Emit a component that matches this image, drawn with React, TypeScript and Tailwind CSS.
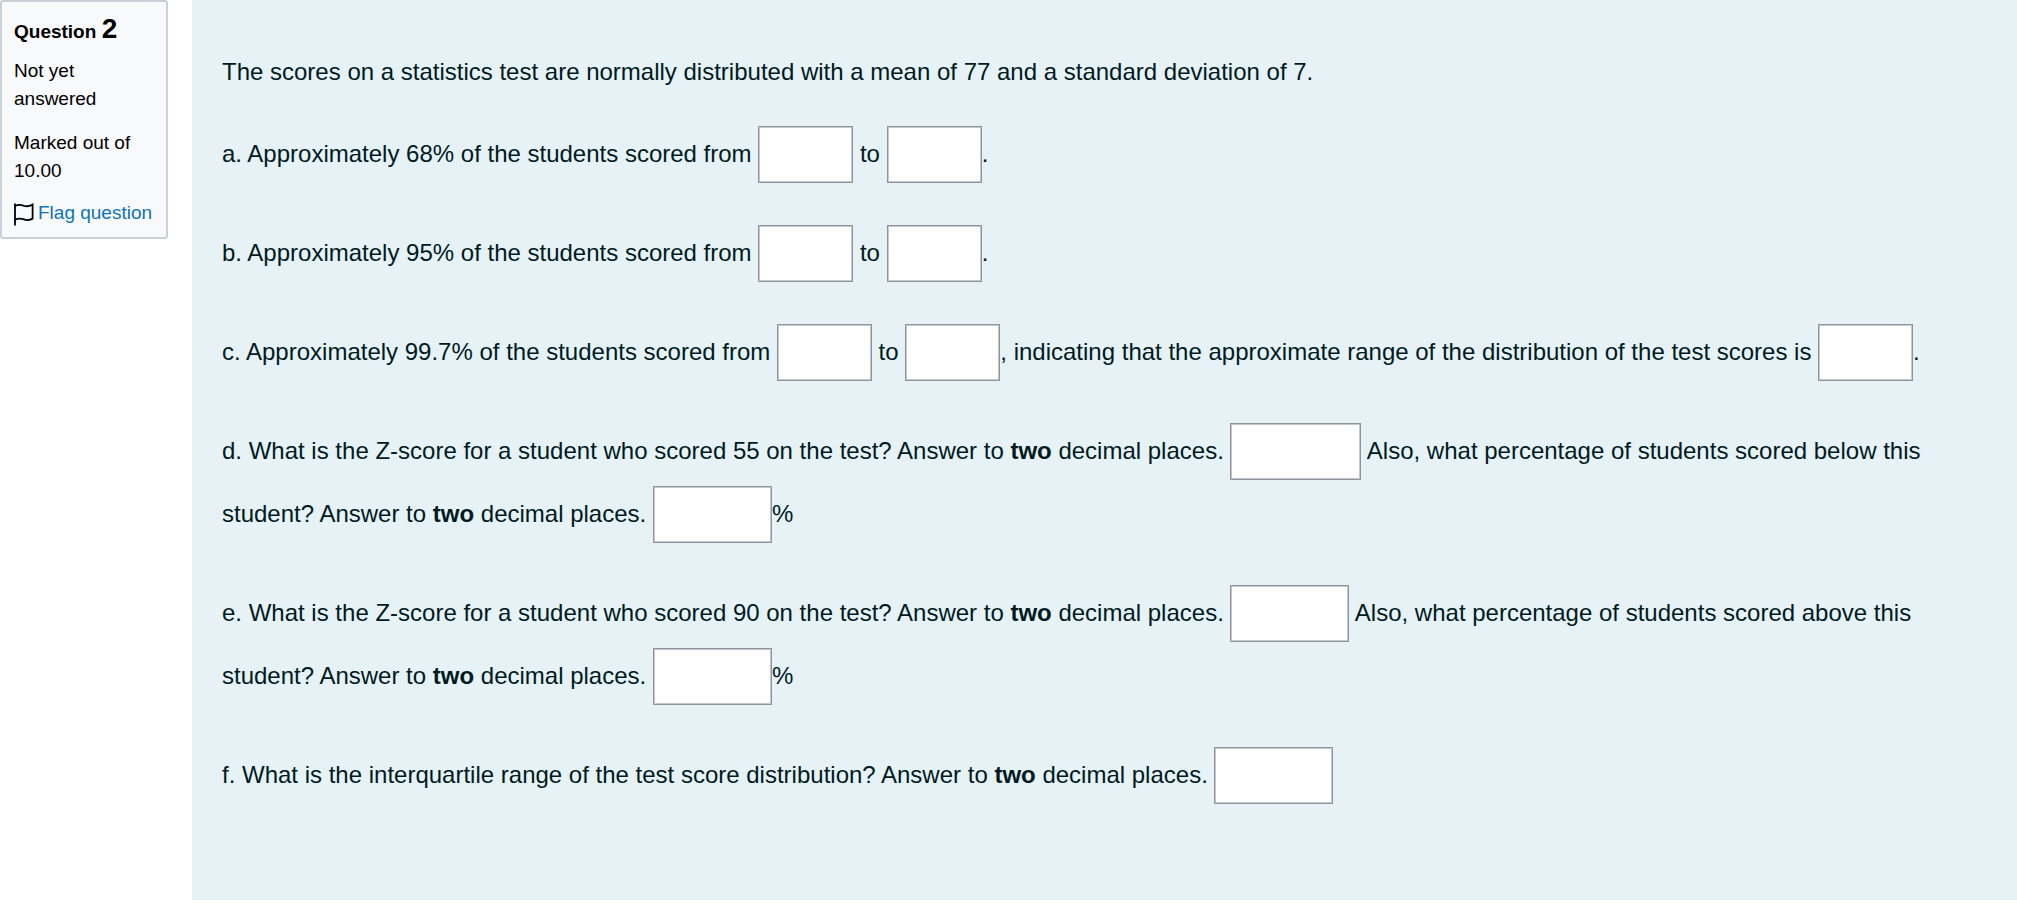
import type { ReactNode } from 'react'

type BlankSize = 'sm' | 'md' | 'lg'

const blankWidths: Record<BlankSize, string> = {
  sm: 'w-[95px]',
  md: 'w-[119px]',
  lg: 'w-[131px]',
}

function Blank({ label, size = 'sm' }: { label: string; size?: BlankSize }) {
  return (
    <input
      type="text"
      aria-label={label}
      className={`${blankWidths[size]} h-[57px] px-3 mt-[2px] mb-[4px] align-middle bg-white border border-[#8f959e] shadow-[inset_0_0_0_1px_#c3c7cd]`}
    />
  )
}

function Part({ children }: { children: ReactNode }) {
  return <p className="mb-9">{children}</p>
}

function FlagIcon() {
  return (
    <svg width="20" height="24" viewBox="0 0 20 24" fill="none" stroke="#000" className="shrink-0" aria-hidden="true">
      <path d="M1 0.5V22.5" strokeWidth="1.8" />
      <path d="M1 3C4 1.4 7 1.6 10 2.8C13 3.8 15.5 3.2 18.6 1.6V15.6C15.5 17.2 13 17.6 10 16.4C7 15.4 4 15.2 1 16.8" strokeWidth="1.8" />
    </svg>
  )
}

export default function App() {
  return (
    <div className="flex items-start gap-6 bg-white font-['Liberation_Sans',Arial,sans-serif] text-2xl leading-9">
      <aside className="w-[168px] shrink-0 rounded-[3px] border-2 border-[#cad0d7] bg-[#f8f9fb] pt-[13px] pr-2 pb-[10px] pl-3 text-[19px] leading-7 text-black">
        <h3 className="font-bold">
          Question <span className="text-[28px]">2</span>
        </h3>
        <div className="mt-[11px]">Not yet answered</div>
        <div className="mt-4">Marked out of 10.00</div>
        <a href="#flag" className="mt-[14px] flex items-end gap-1 whitespace-nowrap text-[#0f74b5]">
          <FlagIcon />
          Flag question
        </a>
      </aside>

      <main className="min-w-0 flex-1 bg-[#e6f2f6] pt-[54px] pr-[60px] pb-14 pl-[30px] text-[#001a1e]">
        <p className="mb-[34px]">
          The scores on a statistics test are normally distributed with a mean of 77 and a standard deviation of 7.
        </p>
        <Part>
          a. Approximately 68% of the students scored from <Blank label="68% lower bound" /> to{' '}
          <Blank label="68% upper bound" />.
        </Part>
        <Part>
          b. Approximately 95% of the students scored from <Blank label="95% lower bound" /> to{' '}
          <Blank label="95% upper bound" />.
        </Part>
        <Part>
          c. Approximately 99.7% of the students scored from <Blank label="99.7% lower bound" /> to{' '}
          <Blank label="99.7% upper bound" />, indicating that the approximate range of the distribution of the test
          scores is <Blank label="Approximate range" />.
        </Part>
        <Part>
          d. What is the Z-score for a student who scored 55 on the test? Answer to <strong>two</strong> decimal
          places. <Blank label="Z-score for 55" size="lg" /> Also, what percentage of students scored below this
          student? Answer to <strong>two</strong> decimal places. <Blank label="Percentage below 55" size="md" />%
        </Part>
        <Part>
          e. What is the Z-score for a student who scored 90 on the test? Answer to <strong>two</strong> decimal
          places. <Blank label="Z-score for 90" size="md" /> Also, what percentage of students scored above this
          student? Answer to <strong>two</strong> decimal places. <Blank label="Percentage above 90" size="md" />%
        </Part>
        <Part>
          f. What is the interquartile range of the test score distribution? Answer to <strong>two</strong> decimal
          places. <Blank label="Interquartile range" size="md" />
        </Part>
      </main>
    </div>
  )
}
